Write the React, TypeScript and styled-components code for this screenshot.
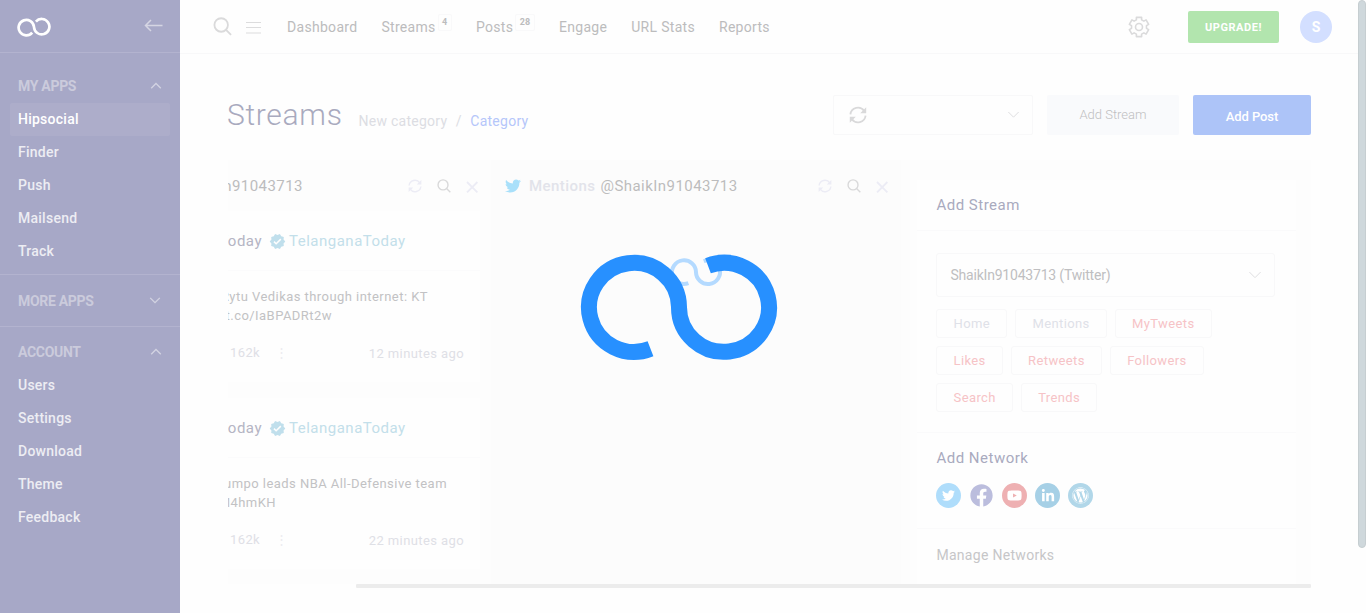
import React from "react";
import styled, { createGlobalStyle, css } from "styled-components";
import { FaTwitter, FaFacebook, FaYoutube, FaLinkedinIn, FaWordpress } from "react-icons/fa";
import { MdVerified } from "react-icons/md";

const Global = createGlobalStyle`
  *, *::before, *::after { box-sizing: border-box; }
  body { margin: 0; background: #fefefe; font-family: Roboto, "Liberation Sans", sans-serif; font-size: 14px; overflow: hidden; }
`;

const Shell = styled.div`
  display: flex;
  width: 1366px;
  height: 613px;
  overflow: hidden;
`;

/* ---------- sidebar ---------- */
const Sidebar = styled.aside`
  flex: 0 0 180px;
  background: #a7a8c7;
  color: #ededf3;
`;
const Brand = styled.div`
  display: flex;
  justify-content: space-between;
  height: 53px;
  padding: 17px 17px 0 17px;
  border-bottom: 1px solid #b3b3cf;
`;
const Group = styled.section<{ $top: number; $bottom: number; $line?: boolean }>`
  padding: ${(p) => p.$top}px 10px ${(p) => p.$bottom}px;
  ${(p) => p.$line && css`border-bottom: 1px solid #b3b3cf;`}
`;
const GroupTitle = styled.div<{ $open?: boolean }>`
  display: flex;
  align-items: center;
  justify-content: space-between;
  height: 33px;
  padding: 0 ${(p) => (p.$open ? 8 : 9)}px ${(p) => (p.$open ? 2 : 0)}px 8px;
  color: #cbcbdc;
  font-weight: 700;
  letter-spacing: -0.3px;
`;
const SideItem = styled.a<{ $active?: boolean }>`
  display: flex;
  align-items: center;
  height: 33px;
  padding: 0 8px 2px;
  border-radius: 2px;
  font-weight: 500;
  letter-spacing: 0.25px;
  color: ${(p) => (p.$active ? "#ffffff" : "#ededf3")};
  background: ${(p) => (p.$active ? "#adadca" : "transparent")};
`;

/* ---------- top bar ---------- */
const Main = styled.main`
  flex: 0 0 1178px;
  min-width: 0;
`;
const TopBar = styled.header`
  display: flex;
  align-items: center;
  height: 54px;
  padding: 0 26px 0 33px;
  border-bottom: 1px solid #f8f8f9;
`;
const TopIcons = styled.div`
  display: flex;
  align-items: center;
  gap: 14px;
  width: 74px;
`;
const Nav = styled.nav`
  display: flex;
  align-items: center;
  gap: 24px;
  flex: 1;
`;
const NavLink = styled.a`
  display: flex;
  color: #bcbcbd;
  letter-spacing: 0.3px;
  white-space: nowrap;
  line-height: 16px;
`;
const Count = styled.sup`
  height: 17px;
  margin: -5px 0 0 2px;
  padding: 0 3.5px;
  border: 1px solid #f9f9fa;
  border-radius: 2px;
  font-size: 9px;
  line-height: 15px;
  font-weight: 700;
  letter-spacing: 0.2px;
  color: #bcbcbd;
`;
const Upgrade = styled.button`
  width: 91px;
  height: 32px;
  margin: 0 21px 0 37px;
  padding: 1px 0 0;
  border: 0;
  border-radius: 2px;
  background: #b2e5ae;
  color: #fff;
  font: 700 11px Roboto, sans-serif;
  letter-spacing: 0.55px;
`;
const Avatar = styled.div`
  width: 32px;
  height: 32px;
  border-radius: 50%;
  background: #d3dfff;
  color: #fff;
  font-weight: 700;
  line-height: 33px;
  text-align: center;
`;

/* ---------- page head ---------- */
const Page = styled.div`
  padding: 41px 47px 0 48px;
`;
const PageHead = styled.div`
  display: flex;
  align-items: center;
  height: 40px;
  margin-bottom: 25px;
`;
const Title = styled.h1`
  margin: -2px 16px 0 -1px;
  font-size: 30px;
  font-weight: 300;
  letter-spacing: 0.7px;
  color: #a9aabe;
`;
const Crumbs = styled.div`
  display: flex;
  flex: 1;
  gap: 8.5px;
  padding-top: 12px;
  letter-spacing: 0.25px;
  color: #dcdde3;
  span:last-child { color: #b5c6fa; }
`;
const Refresher = styled.div`
  display: flex;
  align-items: center;
  justify-content: space-between;
  width: 200.5px;
  height: 40px;
  margin-right: 14px;
  padding: 0 12px 0 15px;
  border: 1px solid #f8f8f9;
  border-radius: 2px;
`;
const Action = styled.button<{ $primary?: boolean }>`
  width: ${(p) => (p.$primary ? 118 : 132)}px;
  height: 40px;
  margin-left: ${(p) => (p.$primary ? 14 : 0)}px;
  padding: ${(p) => (p.$primary ? "3px 0 0" : "0 0 2px")};
  border: 0;
  border-radius: 2px;
  background: ${(p) => (p.$primary ? "#adc4f8" : "#f9fafc")};
  color: ${(p) => (p.$primary ? "#fff" : "#bfbfc1")};
  font: ${(p) => (p.$primary ? "500" : "300")} 13px Roboto, sans-serif;
  letter-spacing: ${(p) => (p.$primary ? -0.1 : 0)}px;
`;

/* ---------- board ---------- */
const Board = styled.div`
  display: flex;
  height: 424px;
  overflow: hidden;
`;
const Column = styled.section<{ $w: number; $bg: string }>`
  flex: 0 0 ${(p) => p.$w}px;
  overflow: hidden;
  background: ${(p) => p.$bg};
`;
const ColumnHead = styled.div<{ $first?: boolean }>`
  display: flex;
  align-items: center;
  justify-content: space-between;
  height: 51px;
  padding: 0 12px 0 ${(p) => (p.$first ? 0 : 14)}px;
`;
const ColumnName = styled.div`
  display: flex;
  align-items: center;
  font-size: 15px;
  letter-spacing: 0.45px;
  white-space: nowrap;
  color: #bcbcbd;
  b { margin: 0 5px 0 8px; font-weight: 500; color: #e2e3ea; }
`;
const Tools = styled.div`
  display: flex;
  align-items: center;
  gap: 15px;
`;
const Tweet = styled.article`
  width: 252px;
  height: 171px;
  margin-bottom: 16px;
  overflow: hidden;
  background: #fefefe;
`;
const TweetHead = styled.div`
  display: flex;
  align-items: center;
  height: 60px;
  padding-top: 1px;
  border-bottom: 1px solid #fbfbfc;
  font-size: 15px;
  letter-spacing: 0.5px;
  color: #c3dfea;
  svg { margin: 0 3px 0 7px; }
`;
const Clip = styled.div<{ $w: number; $tone?: string }>`
  display: flex;
  justify-content: flex-end;
  width: ${(p) => p.$w}px;
  overflow: hidden;
  white-space: nowrap;
  color: ${(p) => p.$tone || "#c2c2c4"};
`;
const TweetBody = styled.div`
  padding-top: 16px;
  font-size: 13px;
  line-height: 19px;
  letter-spacing: 0.45px;
`;
const TweetFoot = styled.div`
  display: flex;
  justify-content: space-between;
  padding: 20px 16px 0 2px;
  font-size: 13px;
  line-height: 15px;
  letter-spacing: 0.4px;
  color: #dfe0e6;
`;
const Age = styled.span`
  padding-top: 1px;
`;
const Dots = styled.span`
  padding-left: 15px;
  font-weight: 300;
  color: #ececf0;
`;

const Panel = styled.div`
  width: 379px;
  height: 404px;
  margin: 20px 0 0 16px;
  background: #fefefe;
`;
const Block = styled.div<{ $h: number; $pt: number }>`
  height: ${(p) => p.$h}px;
  padding: ${(p) => p.$pt}px 21px 0 19.4px;
  border-bottom: 1px solid #fafafb;
`;
const Heading = styled.h2`
  margin: 0;
  font-size: 15px;
  line-height: 18px;
  font-weight: 400;
  letter-spacing: 0.5px;
  color: #a9aabe;
`;
const Select = styled.div`
  display: flex;
  align-items: center;
  justify-content: space-between;
  height: 44px;
  margin-bottom: 12px;
  padding: 0 12px 0 13px;
  border: 1px solid #f8f8f9;
  border-radius: 3px;
  font-size: 14px;
  letter-spacing: -0.2px;
  color: #bfbfc1;
`;
const Chips = styled.div`
  display: flex;
  flex-wrap: wrap;
  gap: 8px;
  width: 300px;
`;
const Chip = styled.span<{ $muted?: boolean }>`
  height: 29px;
  padding: 0 16.2px;
  border: 1px solid #f8f8f9;
  border-radius: 3px;
  font-size: 13px;
  line-height: 27px;
  letter-spacing: 0.38px;
  color: ${(p) => (p.$muted ? "#dfe1e8" : "#f6c3c6")};
`;
const Networks = styled.div`
  display: flex;
  gap: 8px;
  margin: 16px 0 0 -0.4px;
`;
const Network = styled.span<{ $c: string }>`
  display: flex;
  align-items: center;
  justify-content: center;
  width: 25px;
  height: 25px;
  border-radius: 50%;
  background: ${(p) => p.$c};
  color: #fff;
`;
const Manage = styled.div`
  padding: 18px 19.4px;
  letter-spacing: 0.3px;
  color: #c6c6c8;
`;
const HorizontalThumb = styled.div`
  height: 4px;
  margin-left: 128px;
  border-radius: 1px;
  background: #ececec;
`;
const Scrollbar = styled.div`
  flex: 0 0 8px;
  height: 548px;
  border: 1px solid #c6ced1;
  border-radius: 4px;
  background: #cfd8dc;
`;
const Loader = styled.svg`
  position: absolute;
  left: 576px;
  top: 248px;
`;

/* ---------- icons ---------- */
const Chevron = ({ up, w = 12, c = "#d3d3e2", s = 1.3 }: { up?: boolean; w?: number; c?: string; s?: number }) => (
  <svg width={w} height={w * 0.6} viewBox="0 0 20 12" fill="none" stroke={c} strokeWidth={(s * 20) / w}>
    <path d={up ? "M2 10.5 10 2.5l8 8" : "M2 1.5l8 8 8-8"} />
  </svg>
);
const Search = ({ size, c, s }: { size: number; c: string; s: number }) => (
  <svg width={size} height={size} viewBox="0 0 20 20" fill="none" stroke={c} strokeWidth={s}>
    <circle cx="8.6" cy="8.4" r="7.1" />
    <path d="m13.7 13.6 5.3 5.3" />
  </svg>
);
const Sync = ({ size, c }: { size: number; c: string }) => (
  <svg width={size} height={size} viewBox="0 0 18 18" fill="none" stroke={c} strokeWidth="1.8">
    <path d="M1.4 8.4A7.6 7.6 0 0 1 15.2 5M16.6 9.6A7.6 7.6 0 0 1 2.8 13" />
    <path d="M17.2 1.2v6h-6zM.8 16.8v-6h6z" fill={c} stroke="none" />
  </svg>
);
const Close = () => (
  <svg width="13" height="14" viewBox="0 0 13 14" stroke="#ececf5" strokeWidth="1.8">
    <path d="m1 3 10.4 10.4M11.4 3 1 13.4" />
  </svg>
);

const gearOutline = Array.from({ length: 6 }, (_, tooth) =>
  [[-20, 7.6], [-15, 10], [15, 10], [20, 7.6]].map(([offset, radius]) => {
    const angle = ((tooth * 60 - 90 + offset) * Math.PI) / 180;
    return `${(12 + radius * Math.cos(angle)).toFixed(2)},${(12 + radius * Math.sin(angle)).toFixed(2)}`;
  }).join(" "),
).join(" ");
const Gear = () => (
  <svg width="24" height="24" viewBox="0 0 24 24" fill="none" stroke="#dadadb" strokeWidth="1.6" strokeLinejoin="round">
    <polygon points={gearOutline} />
    <circle cx="12" cy="12" r="3.5" />
  </svg>
);

const ColumnTools = () => (
  <Tools>
    <Sync size={14} c="#ececf5" />
    <Search size={14} c="#d9d9da" s={2} />
    <Close />
  </Tools>
);

const tweets = [
  { first: "Rytu Vedikas through internet: KT", fw: 200, second: "t.co/IaBPADRt2w", sw: 104, age: "12 minutes ago" },
  { first: "umpo leads NBA All-Defensive team", fw: 219, second: "M4hmKH", sw: 48, age: "22 minutes ago" },
];
const chips = ["Home", "Mentions", "MyTweets", "Likes", "Retweets", "Followers", "Search", "Trends"];

const INFINITY = "M74.5 100.8A45 44.5 0 1 1 103 59A45 44.5 0 1 0 132 17.7";

export default function App() {
  return (
    <>
      <Global />
      <Shell>
        <Sidebar>
          <Brand>
            <svg width="34" height="20" viewBox="0 0 34 20" fill="none" stroke="#fff" strokeWidth="2.7">
              <path d="M15.2 15.6A7.7 7.7 0 1 1 17 10A7.7 7.7 0 1 0 18.9 4.6" />
            </svg>
            <svg width="19" height="16" viewBox="0 0 19 16" fill="none" stroke="#d5d5e3" strokeWidth="1.5">
              <path d="M18.5 8.5H1.5M7 3 1.5 8.5 7 14" />
            </svg>
          </Brand>
          <Group $top={17} $bottom={6} $line>
            <GroupTitle $open>MY APPS<Chevron up /></GroupTitle>
            <SideItem $active>Hipsocial</SideItem>
            <SideItem>Finder</SideItem>
            <SideItem>Push</SideItem>
            <SideItem>Mailsend</SideItem>
            <SideItem>Track</SideItem>
          </Group>
          <Group $top={9} $bottom={9} $line>
            <GroupTitle>MORE APPS<Chevron /></GroupTitle>
          </Group>
          <Group $top={9} $bottom={0}>
            <GroupTitle $open>ACCOUNT<Chevron up /></GroupTitle>
            <SideItem>Users</SideItem>
            <SideItem>Settings</SideItem>
            <SideItem>Download</SideItem>
            <SideItem>Theme</SideItem>
            <SideItem>Feedback</SideItem>
          </Group>
        </Sidebar>

        <Main>
          <TopBar>
            <TopIcons>
              <Search size={19} c="#dadadb" s={1.9} />
              <svg width="15" height="14" viewBox="0 0 15 14" stroke="#dcdcdd">
                <path d="M0 2.5h15M0 7.5h15M0 13h15" />
              </svg>
            </TopIcons>
            <Nav>
              <NavLink>Dashboard</NavLink>
              <NavLink>Streams<Count>4</Count></NavLink>
              <NavLink>Posts<Count>28</Count></NavLink>
              <NavLink>Engage</NavLink>
              <NavLink>URL Stats</NavLink>
              <NavLink>Reports</NavLink>
            </Nav>
            <Gear />
            <Upgrade>UPGRADE!</Upgrade>
            <Avatar>S</Avatar>
          </TopBar>

          <Page>
            <PageHead>
              <Title>Streams</Title>
              <Crumbs><span>New category</span><span>/</span><span>Category</span></Crumbs>
              <Refresher><Sync size={18} c="#d9d9da" /><Chevron c="#dedee0" w={13} s={1} /></Refresher>
              <Action>Add Stream</Action>
              <Action $primary>Add Post</Action>
            </PageHead>

            <Board>
              <Column $w={263} $bg="#fdfdfd">
                <ColumnHead $first>
                  <Clip $w={75}><ColumnName>n91043713</ColumnName></Clip>
                  <ColumnTools />
                </ColumnHead>
                {tweets.map((t) => (
                  <Tweet key={t.age}>
                    <TweetHead>
                      <Clip $w={34} $tone="#b5b5c4">Today</Clip>
                      <MdVerified size={17} color="#c0dfec" />
                      TelanganaToday
                    </TweetHead>
                    <TweetBody>
                      <Clip $w={t.fw}>{t.first}</Clip>
                      <Clip $w={t.sw}>{t.second}</Clip>
                    </TweetBody>
                    <TweetFoot>
                      <span>162k<Dots>⋮</Dots></span>
                      <Age>{t.age}</Age>
                    </TweetFoot>
                  </Tweet>
                ))}
              </Column>

              <Column $w={410} $bg="#fcfcfc">
                <ColumnHead>
                  <ColumnName><FaTwitter size={16} color="#a9e0fa" /><b>Mentions</b>@ShaikIn91043713</ColumnName>
                  <ColumnTools />
                </ColumnHead>
              </Column>

              <Column $w={410} $bg="#fdfdfd">
                <Panel>
                  <Block $h={51} $pt={16}><Heading>Add Stream</Heading></Block>
                  <Block $h={202} $pt={22}>
                    <Select>ShaikIn91043713 (Twitter)<Chevron c="#dedee0" w={14} s={1} /></Select>
                    <Chips>
                      {chips.map((c, i) => <Chip key={c} $muted={i < 2}>{c}</Chip>)}
                    </Chips>
                  </Block>
                  <Block $h={96} $pt={16}>
                    <Heading>Add Network</Heading>
                    <Networks>
                      <Network $c="#afddfb"><FaTwitter size={13} /></Network>
                      <Network $c="transparent"><FaFacebook size={23} color="#bbbddd" /></Network>
                      <Network $c="#eeb0b2"><FaYoutube size={15} /></Network>
                      <Network $c="#a6d0e6"><FaLinkedinIn size={14} /></Network>
                      <Network $c="#b1d7e9"><FaWordpress size={17} /></Network>
                    </Networks>
                  </Block>
                  <Manage>Manage Networks</Manage>
                </Panel>
              </Column>
            </Board>
            <HorizontalThumb />
          </Page>
        </Main>
        <Scrollbar />
      </Shell>

      <Loader width="206" height="116" viewBox="0 0 206 116" fill="none">
        <g transform="translate(92.5 8.3) scale(.267)">
          <path d={INFINITY} stroke="#b4daff" strokeWidth="15" />
        </g>
        <path d={INFINITY} stroke="#2790ff" strokeWidth="16" />
      </Loader>
    </>
  );
}
